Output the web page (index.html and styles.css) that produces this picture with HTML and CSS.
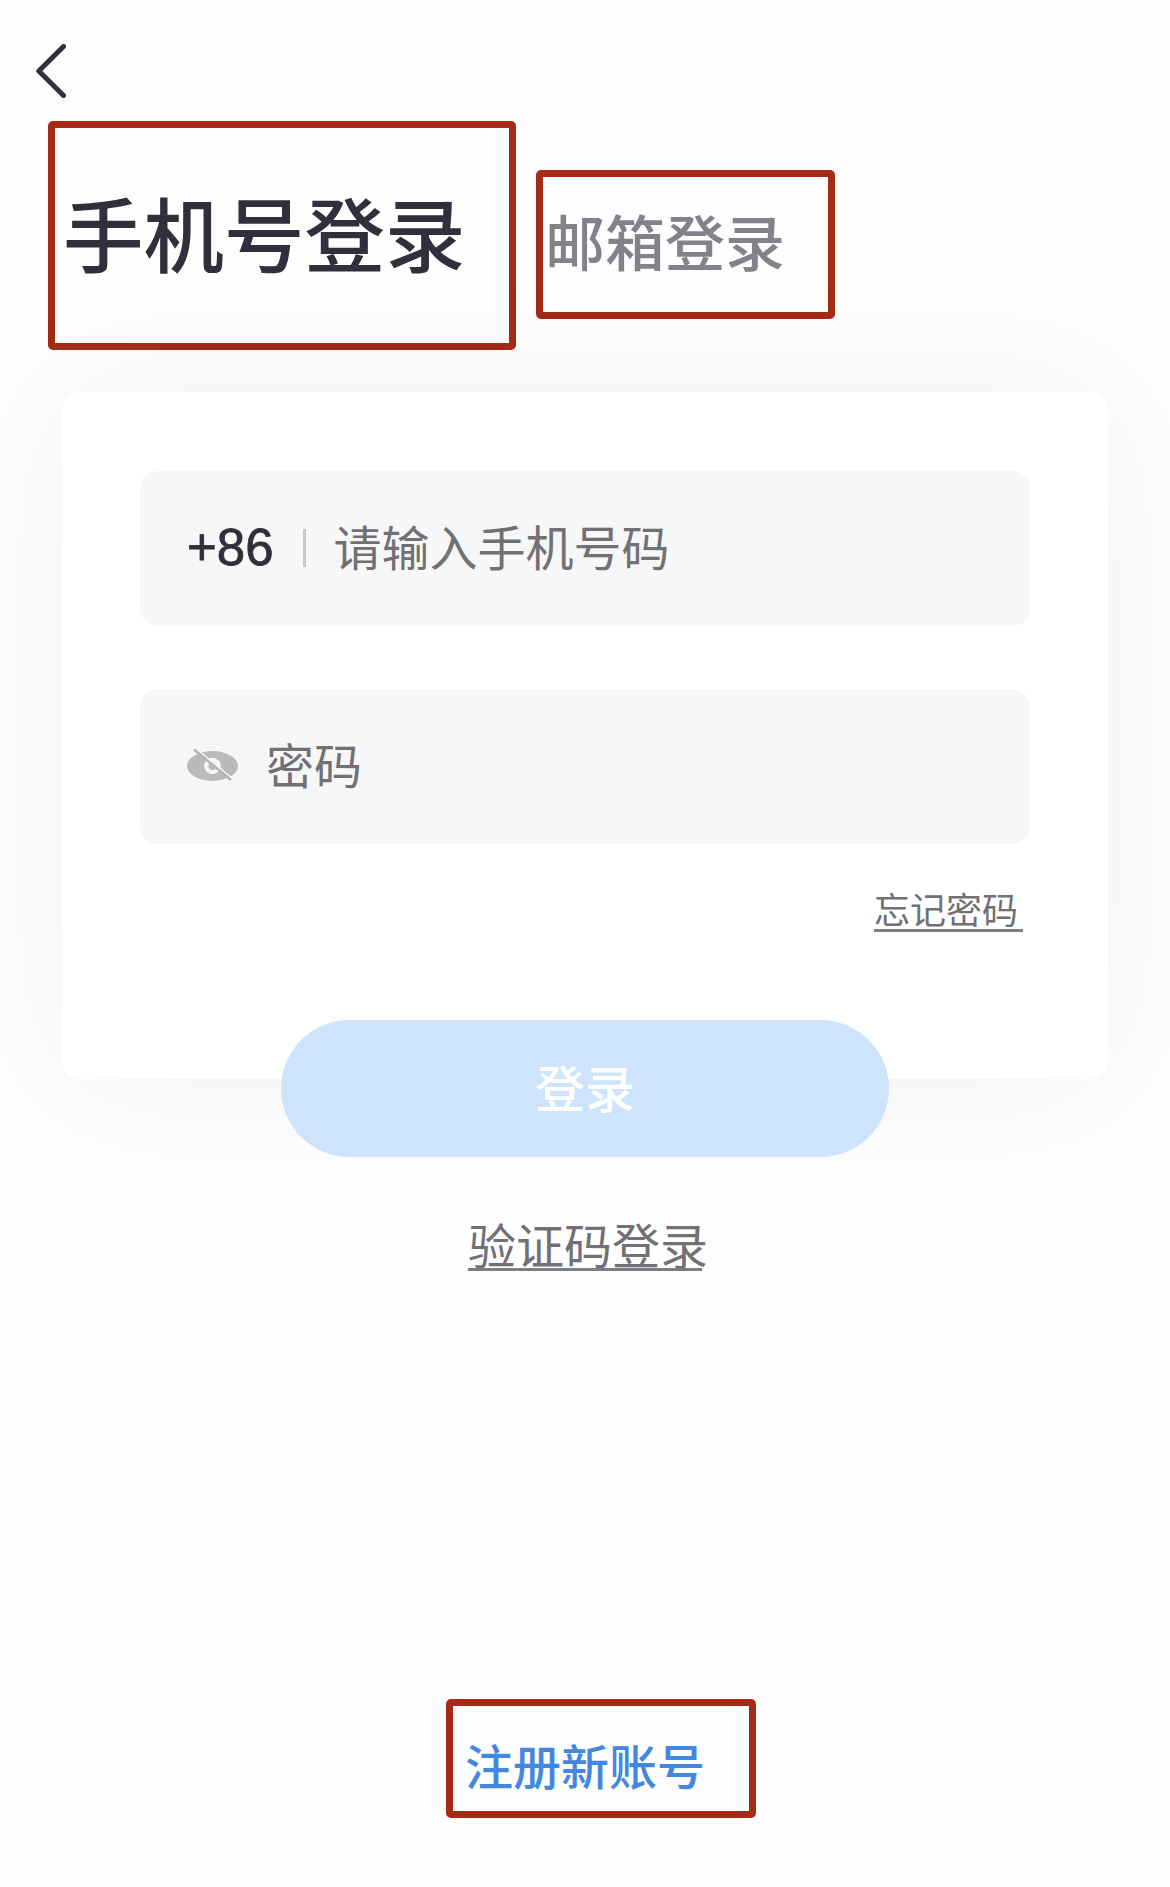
FILE: index.html
```html
<!DOCTYPE html>
<html lang="zh-CN">

<head>
    <meta charset="UTF-8">
    <meta name="viewport" content="width=device-width, initial-scale=1.0">
    <title>手机号登录</title>
    <link rel="stylesheet" href="styles.css">
</head>

<body>
    <div class="page">
        <header class="header">
            <button type="button" class="back" aria-label="返回">
                <svg width="30" height="54" viewBox="0 0 30 54">
                    <path d="M27.5 2.5L2.8 27L27.5 51.5" />
                </svg>
            </button>
        </header>

        <nav class="tabs">
            <a class="tab tab-active marked">手机号登录</a>
            <a class="tab tab-mail marked">邮箱登录</a>
        </nav>

        <form class="card">
            <div class="field">
                <span class="code">+86</span>
                <span class="divider"></span>
                <input type="tel" name="phone" placeholder="请输入手机号码">
            </div>
            <div class="field">
                <svg class="eye" width="52" height="34" viewBox="0 0 52 34">
                    <ellipse class="eye-shape" cx="25.5" cy="18" rx="25.5" ry="15" />
                    <circle class="eye-hole" cx="25.5" cy="18" r="8.3" />
                    <circle class="eye-shape" cx="25.5" cy="18" r="4" />
                    <path class="eye-gap" d="M9.5 1L46 31" />
                    <path class="eye-line" d="M7 1.5L44 32" />
                </svg>
                <input type="password" name="password" placeholder="密码">
            </div>
            <a class="forgot">忘记密码</a>
            <button type="submit" class="login">登录</button>
        </form>

        <a class="sms-login">验证码登录</a>

        <a class="register marked">注册新账号</a>
    </div>
</body>

</html>
```

FILE: styles.css
```css
* {
    box-sizing: border-box;
}

body {
    margin: 0;
    background-color: #fefefe;
    font-family: "Liberation Sans", "Noto Sans CJK SC", sans-serif;
    color: #302f3b;
}

.page {
    display: flex;
    flex-direction: column;
    height: 1887px;
    overflow: hidden;
}

button {
    padding: 0;
    border: none;
    background: none;
    font-family: inherit;
    cursor: pointer;
}

.header {
    height: 121px;
    padding: 44px 0 0 36px;
}

.back {
    display: block;
}

.back svg {
    display: block;
    fill: none;
    stroke: #302f3b;
    stroke-width: 5;
    stroke-linecap: round;
    stroke-linejoin: round;
}

.marked {
    border: 7px solid #a52b17;
    border-radius: 5px;
}

/* Tabs */
.tabs {
    display: flex;
    align-items: flex-start;
    gap: 20px;
    height: 271px;
    padding-left: 48px;
    font-weight: 500;
}

.tab-active {
    width: 468px;
    height: 229px;
    padding-left: 8px;
    font-size: 80.5px;
    line-height: 220px;
}

.tab-mail {
    width: 299px;
    height: 149px;
    margin-top: 49px;
    padding-left: 2px;
    color: #83828a;
    font-size: 60px;
    line-height: 138px;
}

/* Login card */
.card {
    display: flex;
    flex-direction: column;
    height: 687px;
    margin: 0 62px;
    padding: 79px 78px 0;
    border-radius: 18px;
    background-color: #fff;
    box-shadow: 0 0 150px rgba(0, 0, 0, 0.06);
}

.field {
    display: flex;
    flex: none;
    align-items: center;
    height: 155px;
    margin-bottom: 63px;
    padding-left: 47px;
    border-radius: 18px;
    background-color: #f7f7f7;
}

.code {
    margin-top: -2px;
    font-size: 51px;
    -webkit-text-stroke: 0.8px #302f3b;
}

.divider {
    width: 3px;
    height: 38px;
    margin: -2px 28px 0 29px;
    background-color: #c8c8c8;
}

.field input {
    flex: 1;
    min-width: 0;
    height: 80px;
    padding: 2px 0 0;
    border: none;
    outline: none;
    background: none;
    font-family: inherit;
    font-size: 48px;
}

.field input::placeholder {
    color: #717075;
}

.eye {
    margin: 0 27px 4px 0;
}

.eye-shape {
    fill: #bababa;
}

.eye-hole {
    fill: #f7f7f7;
}

.eye-gap {
    stroke: #f7f7f7;
    stroke-width: 1.5;
}

.eye-line {
    stroke: #b5b5b5;
    stroke-width: 2.4;
}

.forgot {
    flex: none;
    align-self: flex-end;
    width: 149px;
    height: 47px;
    margin: -22px 7px 0 0;
    border-bottom: 3px solid #7e7d82;
    color: #717075;
    font-size: 36px;
    line-height: 54px;
}

.login {
    flex: none;
    align-self: center;
    width: 608px;
    height: 137px;
    margin-top: 88px;
    padding-bottom: 5px;
    border-radius: 69px;
    background-color: #cde4fc;
    color: #fff;
    font-size: 50px;
    font-weight: 500;
}

.sms-login {
    width: 234px;
    height: 56px;
    margin: 136px 0 0 468px;
    border-bottom: 3px solid #7e7d82;
    color: #717075;
    font-size: 48px;
    line-height: 65px;
    white-space: nowrap;
}

.register {
    width: 310px;
    height: 119px;
    margin: 428px 0 0 446px;
    padding-left: 12px;
    color: #4487e0;
    font-size: 48px;
    font-weight: 500;
    line-height: 126px;
}
```
